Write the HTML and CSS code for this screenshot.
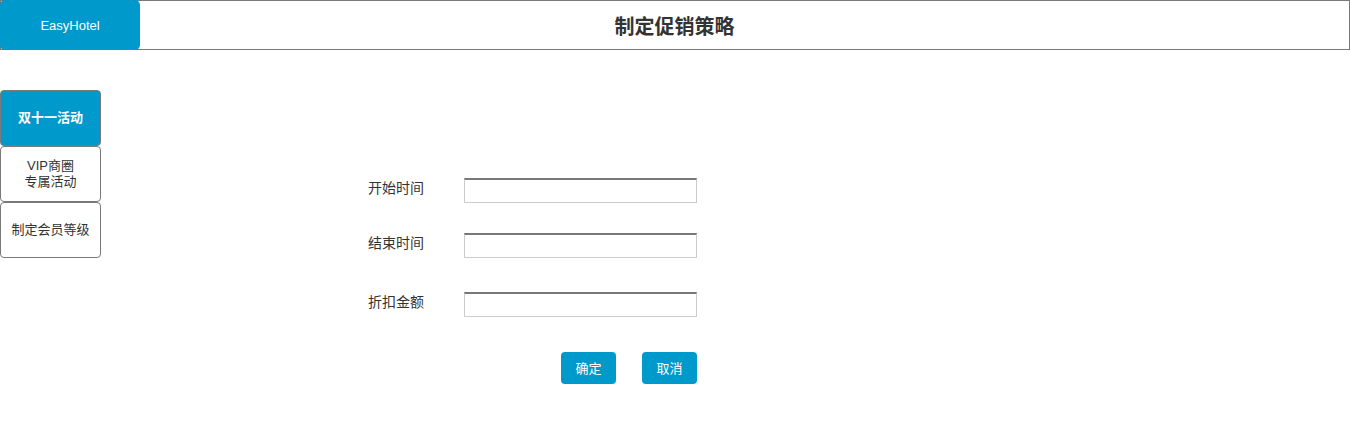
FILE: index.html
```html
<!DOCTYPE html>
<html lang="zh">
<head>
<meta charset="utf-8">
<title>制定促销策略</title>
<link rel="stylesheet" href="styles.css">
</head>
<body>
<header class="topbar">
  <div class="logo">EasyHotel</div>
  <h1 class="title">制定促销策略</h1>
</header>
<div class="layout">
  <nav class="sidebar">
    <div class="nav-item active">双十一活动</div>
    <div class="nav-item">VIP商圈<br>专属活动</div>
    <div class="nav-item">制定会员等级</div>
  </nav>
  <form class="form">
    <div class="row">
      <label class="label">开始时间</label>
      <input class="input" type="text">
    </div>
    <div class="row row-2">
      <label class="label">结束时间</label>
      <input class="input" type="text">
    </div>
    <div class="row row-3">
      <label class="label">折扣金额</label>
      <input class="input" type="text">
    </div>
    <div class="actions">
      <button type="button" class="btn">确定</button>
      <button type="button" class="btn">取消</button>
    </div>
  </form>
</div>
</body>
</html>
```

FILE: styles.css
```css
* { box-sizing: border-box; }
html, body {
  margin: 0;
  padding: 0;
  background: #fff;
}
body {
  width: 1350px;
  height: 443px;
  overflow: hidden;
  font-family: "Liberation Sans", Arial, "Noto Sans CJK SC", sans-serif;
  color: #333;
}
.topbar {
  display: flex;
  align-items: center;
  width: 1350px;
  height: 50px;
  border: 1px solid #797979;
}
.logo {
  flex: 0 0 140px;
  height: 50px;
  margin: -1px 0 -1px -1px;
  background: #0099cc;
  border-radius: 5px;
  color: #fff;
  font-size: 13px;
  display: flex;
  align-items: center;
  justify-content: center;
}
.title {
  flex: 1;
  margin: 0;
  padding-right: 140px;
  padding-top: 1px;
  text-align: center;
  font-size: 20px;
  font-weight: bold;
  color: #333;
  font-family: "Noto Sans CJK SC", sans-serif;
}
.layout {
  display: flex;
  align-items: flex-start;
  margin-top: 40px;
}
.sidebar {
  width: 101px;
  display: flex;
  flex-direction: column;
}
.nav-item {
  height: 56px;
  border: 1px solid #797979;
  border-radius: 4px;
  background: #fff;
  font-size: 13px;
  line-height: 16px;
  color: #333;
  display: flex;
  align-items: center;
  justify-content: center;
  text-align: center;
  font-family: "Liberation Sans", "Noto Sans CJK SC", sans-serif;
}
.nav-item.active {
  background: #0099cc;
  color: #fff;
  font-weight: bold;
  border-color: #797979;
}
.form {
  margin: 88px 0 0 267px;
  width: 329px;
  display: flex;
  flex-direction: column;
}
.row {
  display: flex;
  align-items: flex-start;
}
.row-2 { margin-top: 30px; }
.row-3 { margin-top: 34px; }
.label {
  width: 96px;
  font-size: 14px;
  line-height: 18px;
  color: #333;
  font-family: "Noto Sans CJK SC", sans-serif;
}
.input {
  width: 233px;
  height: 25px;
  margin: 0;
  border: 1px solid #cccccc;
  border-top: 2px solid #797979;
  background: #fff;
  outline: none;
  padding: 0 4px;
}
.actions {
  display: flex;
  justify-content: flex-end;
  gap: 26px;
  margin-top: 35px;
}
.btn {
  width: 55px;
  height: 32px;
  border: none;
  border-radius: 4px;
  background: #0099cc;
  color: #fff;
  font-size: 13px;
  font-family: "Noto Sans CJK SC", sans-serif;
  padding: 0 0 2px;
  cursor: pointer;
}
```
